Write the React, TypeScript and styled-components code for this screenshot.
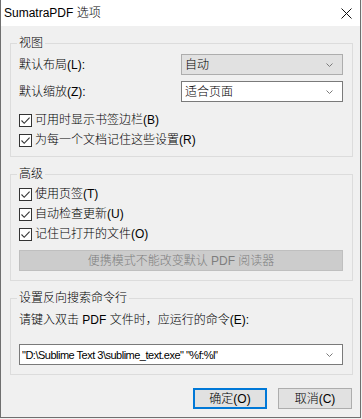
import styled, { createGlobalStyle } from "styled-components"

const GlobalStyle = createGlobalStyle`
  html, body {
    margin: 0;
    padding: 0;
    background: #f0f0f0;
  }
  * {
    box-sizing: border-box;
  }
`

const FONT = `"Liberation Sans", "Noto Sans CJK SC", sans-serif`

const Check = () => (
  <CheckBox>
    <svg width="11" height="11" viewBox="0 0 11 11">
      <path d="M1.5 5.5 L4.2 8.3 L9.6 2.6" fill="none" stroke="#333" strokeWidth="1.1" />
    </svg>
  </CheckBox>
)

const Chevron = () => (
  <svg width="7" height="4" viewBox="0 0 7 4">
    <path d="M0.5 0.5 L3.5 3.5 L6.5 0.5" fill="none" stroke="#7a7a7a" strokeWidth="1" />
  </svg>
)

const CloseIcon = () => (
  <svg width="11" height="11" viewBox="0 0 11 11">
    <path d="M0.5 0.5 L10.5 10.5 M10.5 0.5 L0.5 10.5" stroke="#111" strokeWidth="1" />
  </svg>
)

export const App = () => {
  return (
    <Window>
      <GlobalStyle />
      <TitleBar>
        <Title>SumatraPDF 选项</Title>
        <CloseBtn>
          <CloseIcon />
        </CloseBtn>
      </TitleBar>
      <Body>
        <Group>
          <Legend>视图</Legend>
          <FieldGrid>
            <Label>默认布局(L):</Label>
            <Select $flat>
              <span>自动</span>
              <Chevron />
            </Select>
            <Label>默认缩放(Z):</Label>
            <Select>
              <span>适合页面</span>
              <Chevron />
            </Select>
          </FieldGrid>
          <CheckList $top={8}>
            <CheckRow><Check />可用时显示书签边栏(B)</CheckRow>
            <CheckRow><Check />为每一个文档记住这些设置(R)</CheckRow>
          </CheckList>
        </Group>

        <Group $pb={9}>
          <Legend>高级</Legend>
          <CheckList $top={2}>
            <CheckRow><Check />使用页签(T)</CheckRow>
            <CheckRow><Check />自动检查更新(U)</CheckRow>
            <CheckRow><Check />记住已打开的文件(O)</CheckRow>
          </CheckList>
          <DisabledButton>便携模式不能改变默认 PDF 阅读器</DisabledButton>
        </Group>

        <Group $pb={9}>
          <Legend>设置反向搜索命令行</Legend>
          <Hint>请键入双击 PDF 文件时，应运行的命令(E):</Hint>
          <Select $input>
            <InputText>"D:\Sublime Text 3\sublime_text.exe" "%f:%l"</InputText>
            <Chevron />
          </Select>
        </Group>

        <ButtonRow>
          <DialogButton $primary>确定(O)</DialogButton>
          <DialogButton>取消(C)</DialogButton>
        </ButtonRow>
      </Body>
    </Window>
  )
}
export default App

const Window = styled.div`
  width: 361px;
  height: 418px;
  display: flex;
  flex-direction: column;
  background: #f0f0f0;
  border: 1px solid #6f6f6f;
  border-top: none;
  font-family: ${FONT};
  font-size: 12px;
  font-weight: 300;
  color: #000;
`

const TitleBar = styled.div`
  height: 26px;
  background: #fff;
  display: flex;
  align-items: center;
  justify-content: space-between;
  padding: 0 8px 0 3px;
`

const Title = styled.div`
  font-size: 12px;
  line-height: 16px;
`

const CloseBtn = styled.div`
  display: flex;
  align-items: center;
  margin-top: 1px;
`

const Body = styled.div`
  flex: 1;
  display: flex;
  flex-direction: column;
  padding: 9px 7px 0 9px;
`

const Group = styled.fieldset<{ $pb?: number }>`
  margin: 0 0 9px 0;
  padding: 0 9px ${(p) => p.$pb ?? 6}px 8px;
  border: 1px solid #dcdcdc;
  min-inline-size: 0;
`

const Legend = styled.legend`
  padding: 0 2px;
  margin-left: -2px;
  line-height: 16px;
  font-size: 12px;
`

const FieldGrid = styled.div`
  display: grid;
  grid-template-columns: 162px 1fr;
  row-gap: 6px;
  margin-top: 3px;
  align-items: center;
`

const Label = styled.div`
  line-height: 16px;
`

const Select = styled.div<{ $flat?: boolean; $input?: boolean }>`
  height: 21px;
  display: flex;
  align-items: center;
  justify-content: space-between;
  padding: 0 9px 0 ${(p) => (p.$input ? 2 : 3)}px;
  background: ${(p) => (p.$flat ? "#e1e1e1" : "#fff")};
  border: 1px solid ${(p) => (p.$flat ? "#adadad" : "#7a7a7a")};
  line-height: 16px;
  white-space: nowrap;
  margin-top: ${(p) => (p.$input ? 16 : 0)}px;

  span {
    overflow: hidden;
  }
`

const InputText = styled.span`
  font-size: 11px;
  letter-spacing: -0.5px;
`

const CheckList = styled.div<{ $top: number }>`
  display: flex;
  flex-direction: column;
  margin-top: ${(p) => p.$top}px;
`

const CheckRow = styled.div`
  height: 20px;
  display: flex;
  align-items: center;
  gap: 3px;
  line-height: 16px;
`

const CheckBox = styled.span`
  width: 13px;
  height: 13px;
  border: 1px solid #333;
  background: #fff;
  display: flex;
  align-items: center;
  justify-content: center;
`

const DisabledButton = styled.div`
  margin-top: 6px;
  height: 21px;
  background: #cccccc;
  border: 1px solid #bfbfbf;
  color: #7e7e7e;
  display: flex;
  align-items: center;
  justify-content: center;
  line-height: 16px;
`

const Hint = styled.div`
  margin-top: 6px;
  line-height: 16px;
`

const ButtonRow = styled.div`
  display: flex;
  justify-content: flex-end;
  gap: 11px;
  margin-top: 4px;
  padding-right: 1px;
`

const DialogButton = styled.div<{ $primary?: boolean }>`
  width: 74px;
  height: 21px;
  background: #e1e1e1;
  border: ${(p) => (p.$primary ? "2px solid #0078d7" : "1px solid #adadad")};
  display: flex;
  align-items: center;
  justify-content: center;
  line-height: 16px;
`
